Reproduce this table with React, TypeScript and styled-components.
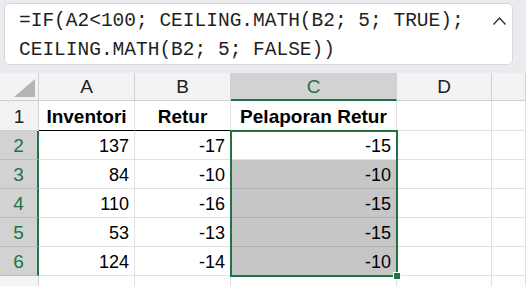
import React from 'react';
import styled, { createGlobalStyle, css } from 'styled-components';

const GlobalStyle = createGlobalStyle`
  html, body {
    margin: 0;
    padding: 0;
    background: #e9ebee;
    overflow: hidden;
  }
  * {
    box-sizing: border-box;
  }
`;

const GREEN = '#217346';

const Page = styled.div`
  width: 526px;
  height: 286px;
  display: flex;
  flex-direction: column;
  font-family: 'Liberation Sans', Arial, sans-serif;
`;

const FormulaBar = styled.div`
  padding: 3px 13px 8px 4px;
`;

const FormulaBox = styled.div`
  height: 62px;
  display: flex;
  justify-content: space-between;
  background: #ffffff;
  border: 1px solid #d6d9dd;
  border-radius: 5px;
  padding: 3px 3px 0 14px;
`;

const FormulaText = styled.div`
  font-family: 'Liberation Mono', 'DejaVu Sans Mono', monospace;
  font-size: 19.5px;
  line-height: 29px;
  color: #1f1f1f;
  white-space: pre;
`;

const Collapse = styled.svg`
  margin-top: 9px;
  margin-right: 2px;
  flex-shrink: 0;
`;

const Sheet = styled.div`
  flex: 1;
  min-height: 0;
  overflow: hidden;
  display: grid;
  grid-template-columns: 39px 96px 96px 166px 95px 1fr;
  grid-template-rows: 28px 30px repeat(5, 29px) 29px;
  background: #ffffff;
`;

const Corner = styled.div`
  background: #f3f3f3;
  border-right: 1px solid #d0d0d0;
  border-bottom: 1px solid #d0d0d0;
  display: flex;
  align-items: flex-end;
  justify-content: flex-end;
  padding: 0 3px 3px 0;
`;

const ColHeader = styled.div<{ $selected?: boolean }>`
  background: ${(p) => (p.$selected ? '#d2d2d2' : '#f3f3f3')};
  color: ${(p) => (p.$selected ? GREEN : '#222222')};
  border-right: 1px solid #d0d0d0;
  border-bottom: ${(p) => (p.$selected ? `2px solid ${GREEN}` : '1px solid #d0d0d0')};
  font-size: 19px;
  display: flex;
  align-items: flex-end;
  justify-content: center;
  padding-bottom: ${(p) => (p.$selected ? '1px' : '2px')};
`;

const RowHeader = styled.div<{ $selected?: boolean }>`
  background: ${(p) => (p.$selected ? '#d2d2d2' : '#f3f3f3')};
  color: ${(p) => (p.$selected ? GREEN : '#222222')};
  border-bottom: 1px solid ${(p) => (p.$selected ? '#bdbdbd' : '#d0d0d0')};
  border-right: ${(p) => (p.$selected ? `2px solid ${GREEN}` : '1px solid #d0d0d0')};
  font-size: 19px;
  display: flex;
  align-items: flex-end;
  justify-content: center;
  padding-bottom: 2px;
`;

const Cell = styled.div<{
  $bold?: boolean;
  $right?: boolean;
  $fill?: boolean;
  $underline?: boolean;
  $active?: boolean;
}>`
  background: ${(p) => (p.$fill ? '#c6c6c6' : '#ffffff')};
  color: #000000;
  border-right: 1px solid #e1e1e1;
  border-bottom: 1px solid ${(p) => (p.$underline ? '#000000' : p.$fill ? '#b0b0b0' : '#e1e1e1')};
  font-size: 18px;
  display: flex;
  align-items: flex-end;
  justify-content: ${(p) => (p.$right ? 'flex-end' : 'center')};
  padding: 0 5px 2px 5px;
  white-space: nowrap;
  overflow: ${(p) => (p.$active ? 'visible' : 'hidden')};
  position: ${(p) => (p.$active ? 'relative' : 'static')};
  ${(p) =>
    p.$bold &&
    css`
      font-weight: 700;
      font-size: 19px;
    `}
`;

/* selection outline drawn over the range starting at the active cell */
const Selection = styled.div<{ $rows: number }>`
  position: absolute;
  left: -1px;
  top: -1px;
  width: 168px;
  height: ${(p) => p.$rows * 29 + 2}px;
  border: 2px solid ${GREEN};
  pointer-events: none;
  z-index: 2;
`;

const FillHandle = styled.div`
  position: absolute;
  right: -5px;
  bottom: -5px;
  width: 8px;
  height: 8px;
  background: ${GREEN};
  border: 1px solid #ffffff;
`;

const rows = [
  { a: '137', b: '-17', c: '-15' },
  { a: '84', b: '-10', c: '-10' },
  { a: '110', b: '-16', c: '-15' },
  { a: '53', b: '-13', c: '-15' },
  { a: '124', b: '-14', c: '-10' },
];

const columns = ['A', 'B', 'C', 'D', ''];

export default function App() {
  return (
    <Page>
      <GlobalStyle />
      <FormulaBar>
        <FormulaBox>
          <FormulaText>
            {'=IF(A2<100; CEILING.MATH(B2; 5; TRUE);\nCEILING.MATH(B2; 5; FALSE))'}
          </FormulaText>
          <Collapse width="15" height="10" viewBox="0 0 15 10">
            <path d="M1.5 8.5 L7.5 2 L13.5 8.5" fill="none" stroke="#333333" strokeWidth="1.4" />
          </Collapse>
        </FormulaBox>
      </FormulaBar>
      <Sheet>
        <Corner>
          <svg width="21" height="18" viewBox="0 0 21 18">
            <polygon points="21,0 21,18 0,18" fill="#b4b4b4" />
          </svg>
        </Corner>
        {columns.map((c, i) => (
          <ColHeader key={i} $selected={c === 'C'}>
            {c}
          </ColHeader>
        ))}

        <RowHeader>1</RowHeader>
        <Cell $bold $underline>Inventori</Cell>
        <Cell $bold $underline>Retur</Cell>
        <Cell $bold>Pelaporan Retur</Cell>
        <Cell />
        <Cell />

        {rows.map((r, i) => (
          <React.Fragment key={i}>
            <RowHeader $selected>{i + 2}</RowHeader>
            <Cell $right>{r.a}</Cell>
            <Cell $right>{r.b}</Cell>
            <Cell $right $fill={i > 0} $active={i === 0}>
              {r.c}
              {i === 0 && (
                <Selection $rows={rows.length}>
                  <FillHandle />
                </Selection>
              )}
            </Cell>
            <Cell />
            <Cell />
          </React.Fragment>
        ))}

        <RowHeader />
        <Cell />
        <Cell />
        <Cell />
        <Cell />
        <Cell />
      </Sheet>
    </Page>
  );
}
